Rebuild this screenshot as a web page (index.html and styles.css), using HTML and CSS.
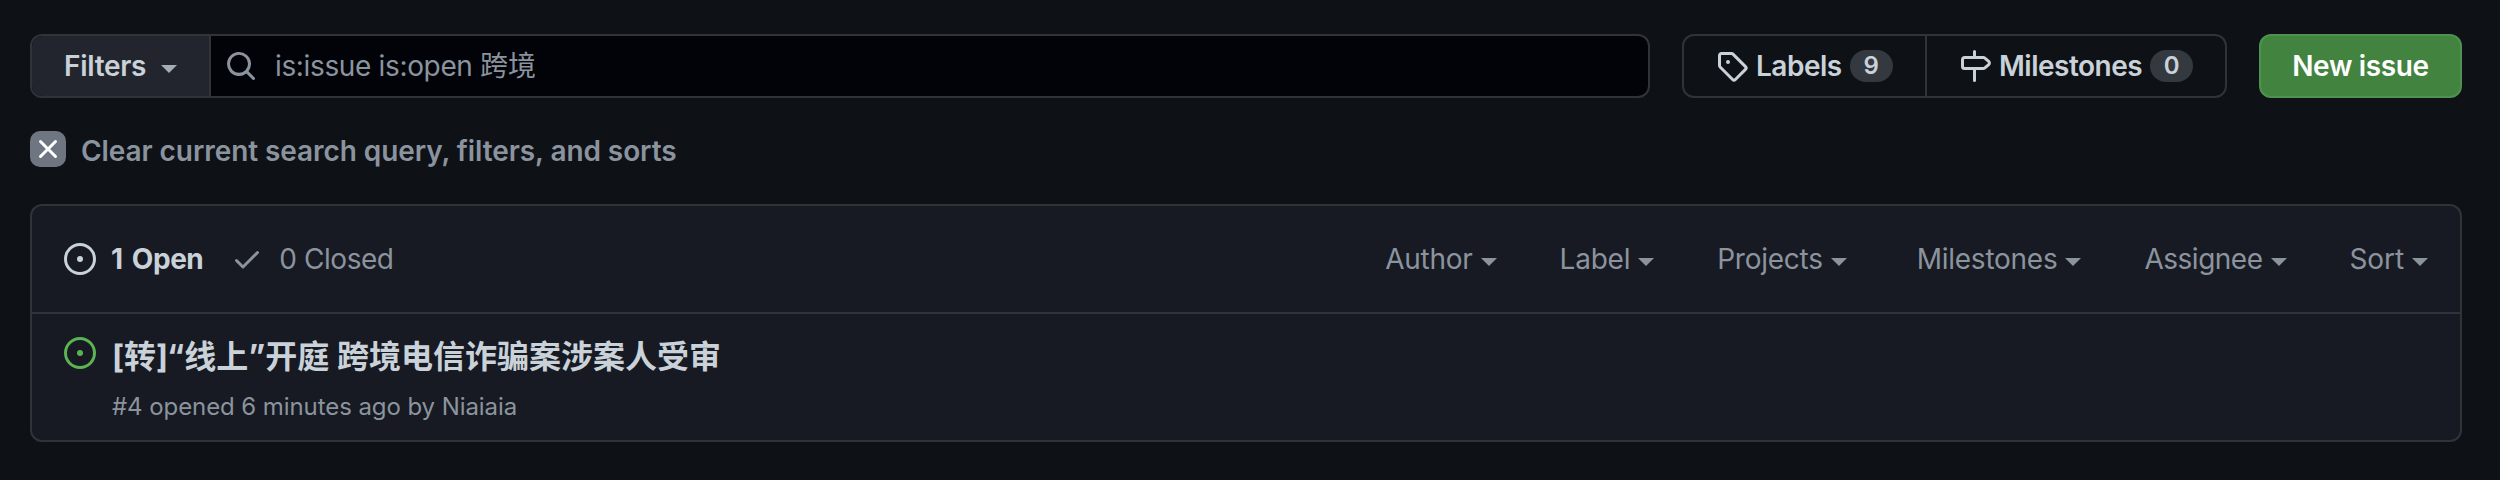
FILE: index.html
```html
<!DOCTYPE html>
<html lang="en">
<head>
<meta charset="utf-8">
<title>Issues</title>
<link rel="stylesheet" href="styles.css">
</head>
<body>
<main class="page">
  <div class="toolbar">
    <div class="search">
      <button class="filters"><span class="t semi t-filters">Filters</span><i class="caret"></i></button>
      <div class="query">
        <svg class="icon" viewBox="0 0 16 16"><path d="M10.68 11.74a6 6 0 0 1-7.922-8.982 6 6 0 0 1 8.982 7.922l3.04 3.04a.749.749 0 1 1-1.06 1.06ZM11.5 7a4.499 4.499 0 1 0-8.997 0A4.499 4.499 0 0 0 11.5 7Z"/></svg>
        <span class="t t-query">is:issue is:open <span class="cjk">跨境</span></span>
      </div>
    </div>
    <nav class="links">
      <a class="link link-labels">
        <svg class="icon" viewBox="0 0 16 16"><path d="M1 7.775V2.75C1 1.784 1.784 1 2.75 1h5.025c.464 0 .91.184 1.238.513l6.25 6.25a1.75 1.75 0 0 1 0 2.474l-5.026 5.026a1.75 1.75 0 0 1-2.474 0l-6.25-6.25A1.752 1.752 0 0 1 1 7.775Zm1.5 0c0 .066.026.13.073.177l6.25 6.25a.25.25 0 0 0 .354 0l5.025-5.025a.25.25 0 0 0 0-.354l-6.25-6.25a.25.25 0 0 0-.177-.073H2.75a.25.25 0 0 0-.25.25ZM6 5a1 1 0 1 1 0 2 1 1 0 0 1 0-2Z"/></svg>
        <span class="t semi t-links">Labels</span><span class="count">9</span>
      </a>
      <a class="link">
        <svg class="icon" viewBox="0 0 16 16"><path d="M7.75 0a.75.75 0 0 1 .75.75V3h3.634c.414 0 .814.147 1.13.414l2.07 1.75a1.75 1.75 0 0 1 0 2.672l-2.07 1.75a1.75 1.75 0 0 1-1.13.414H8.5v5.25a.75.75 0 0 1-1.5 0V10H2.75A1.75 1.75 0 0 1 1 8.25v-3.5C1 3.784 1.784 3 2.75 3H7V.75A.75.75 0 0 1 7.75 0Zm4.384 8.5a.25.25 0 0 0 .161-.06l2.07-1.75a.248.248 0 0 0 0-.38l-2.07-1.75a.25.25 0 0 0-.161-.06H2.75a.25.25 0 0 0-.25.25v3.5c0 .138.112.25.25.25h9.384Z"/></svg>
        <span class="t semi t-links">Milestones</span><span class="count">0</span>
      </a>
    </nav>
    <button class="new"><span class="t semi t-new">New issue</span></button>
  </div>

  <a class="clear">
    <span class="clear-box"><svg viewBox="0 0 16 16"><path d="M3.72 3.72a.75.75 0 0 1 1.06 0L8 6.94l3.22-3.22a.749.749 0 1 1 1.06 1.06L9.06 8l3.22 3.22a.749.749 0 1 1-1.06 1.06L8 9.06l-3.22 3.22a.749.749 0 1 1-1.06-1.06L6.94 8 3.72 4.78a.75.75 0 0 1 0-1.06Z"/></svg></span>
    <span class="t semi t-clear">Clear current search query, filters, and sorts</span>
  </a>

  <section class="list">
    <header class="list-head">
      <a class="state"><svg class="icon" viewBox="0 0 16 16"><path d="M8 9.5a1.5 1.5 0 1 0 0-3 1.5 1.5 0 0 0 0 3Z"/><path d="M8 0a8 8 0 1 1 0 16A8 8 0 0 1 8 0ZM1.5 8a6.5 6.5 0 1 0 13 0 6.5 6.5 0 0 0-13 0Z"/></svg><span class="t t-open">1 Open</span></a>
      <a class="state closed"><svg class="icon" viewBox="0 0 16 16"><path d="M13.78 4.22a.75.75 0 0 1 0 1.06l-7.25 7.25a.75.75 0 0 1-1.06 0L2.22 9.28a.751.751 0 0 1 1.06-1.06L6 10.94l6.72-6.72a.75.75 0 0 1 1.06 0Z"/></svg><span class="t t-closed">0 Closed</span></a>
      <div class="menus">
        <a class="menu"><span class="t">Author</span><i class="caret"></i></a>
        <a class="menu"><span class="t">Label</span><i class="caret"></i></a>
        <a class="menu"><span class="t">Projects</span><i class="caret"></i></a>
        <a class="menu menu-apart"><span class="t">Milestones</span><i class="caret"></i></a>
        <a class="menu menu-tight"><span class="t">Assignee</span><i class="caret"></i></a>
        <a class="menu menu-sort"><span class="t">Sort</span><i class="caret"></i></a>
      </div>
    </header>
    <article class="issue">
      <svg class="icon green" viewBox="0 0 16 16"><path d="M8 9.5a1.5 1.5 0 1 0 0-3 1.5 1.5 0 0 0 0 3Z"/><path d="M8 0a8 8 0 1 1 0 16A8 8 0 0 1 8 0ZM1.5 8a6.5 6.5 0 1 0 13 0 6.5 6.5 0 0 0-13 0Z"/></svg>
      <div class="issue-text">
        <span class="t title">[转]“线上”开庭 跨境电信诈骗案涉案人受审</span>
        <span class="t meta">#4 opened 6 minutes ago by Niaiaia</span>
      </div>
    </article>
  </section>
</main>
</body>
</html>
```
FILE: styles.css
```css
* { box-sizing: border-box; }
body { margin: 0; background: #0e1116; color: #c9d1d9; font: 28px/40px Inter, "Noto Sans CJK SC", sans-serif; }
.page { height: 480px; padding: 34px 38px 0 30px; display: flex; flex-direction: column; }
.t { white-space: nowrap; }
.semi { font-weight: 600; }
.icon { width: 32px; height: 32px; flex: none; fill: currentColor; }
button { font: inherit; color: inherit; padding: 0; }
.caret { width: 0; height: 0; flex: none; margin-top: 6px; border: 8px solid transparent; border-top-color: currentColor; border-bottom: 0; }

.toolbar { display: flex; height: 64px; }
.search { display: flex; width: 1620px; border: 2px solid #303439; border-radius: 12px; overflow: hidden; background: #010308; }
.filters { width: 179px; display: flex; align-items: center; justify-content: space-between; padding: 0 32px; border: 0; border-right: 2px solid #303439; background: #22252d; }
.filters .caret { color: #a5adb5; }
.t-filters { letter-spacing: -0.3px; }
.query { display: flex; align-items: center; gap: 18px; padding-left: 14px; color: #8b949e; }
.t-query { letter-spacing: -0.35px; }
.cjk { letter-spacing: 0; }

.links { display: flex; width: 545px; margin-left: 32px; border: 2px solid #303439; border-radius: 12px; }
.link { display: flex; align-items: center; padding-left: 32px; }
.link .t { margin-left: 8px; }
.link-labels { width: 243px; border-right: 2px solid #303439; }
.t-links { letter-spacing: -0.5px; }
.count { margin-left: 8px; height: 32px; min-width: 43px; border-radius: 16px; background: #34383f; font-size: 24px; line-height: 32px; font-weight: 600; text-align: center; }
.new { width: 203px; margin-left: 32px; border: 2px solid #4f9150; border-radius: 12px; background: #42843f; color: #fff; }
.t-new { letter-spacing: -0.35px; }

.clear { display: flex; margin-top: 33px; height: 40px; gap: 15px; color: #8b949e; }
.clear-box { width: 36px; height: 36px; border-radius: 10px; background: #6e7681; display: flex; align-items: center; justify-content: center; }
.clear-box svg { width: 32px; height: 32px; fill: #fff; }
.t-clear { letter-spacing: -0.07px; }

.list { margin-top: 33px; height: 238px; border: 2px solid #303439; border-radius: 12px; background: #171a22; }
.list-head { height: 108px; border-bottom: 2px solid #303439; display: flex; align-items: center; padding: 0 32px; }
.state { display: flex; align-items: center; gap: 15px; }
.t-open { font-weight: 700; letter-spacing: -0.45px; word-spacing: 3px; }
.closed { margin-left: 28px; gap: 16px; color: #8b949e; }
.t-closed { letter-spacing: -0.45px; }
.menus { margin-left: auto; display: flex; color: #8b949e; gap: 63px; }
.menu { display: flex; align-items: center; gap: 8px; letter-spacing: -0.25px; }
.menu-apart { margin-left: 7px; }
.menu-tight { letter-spacing: -0.5px; }
.menu-sort { letter-spacing: -0.1px; }

.issue { display: flex; padding: 23px 32px 0; gap: 16px; }
.green { color: #5bb353; }
.issue-text { display: flex; flex-direction: column; align-items: flex-start; }
.title { font-size: 32px; font-weight: 700; }
.meta { font-size: 24px; color: #8b949e; line-height: 36px; margin-top: 12px; letter-spacing: -0.08px; }
```
